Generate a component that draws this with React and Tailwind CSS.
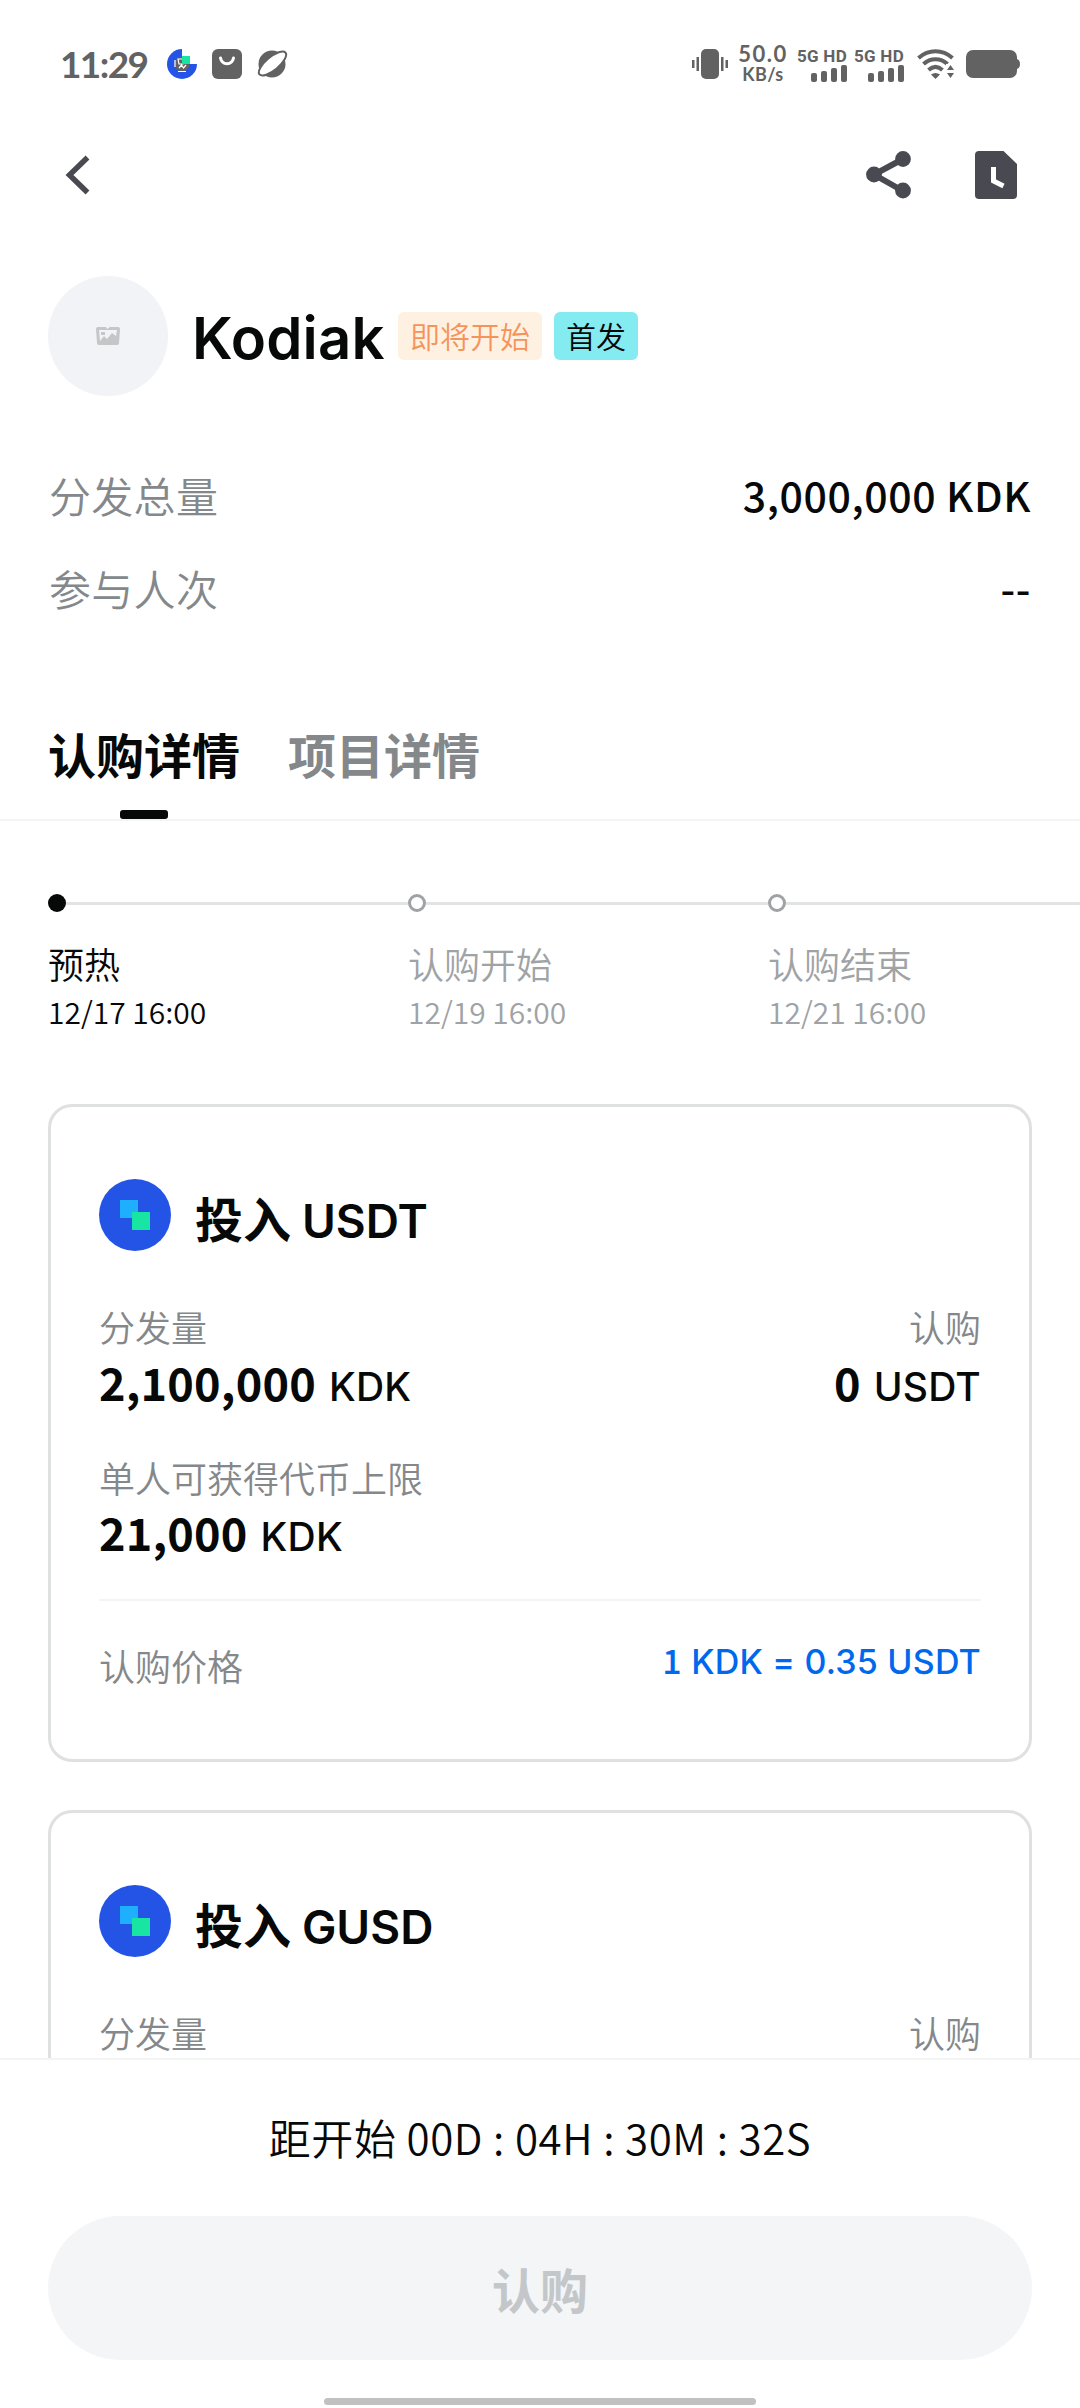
import React from 'react';

const steps = [
  { title: '预热', time: '12/17 16:00', active: true },
  { title: '认购开始', time: '12/19 16:00', active: false },
  { title: '认购结束', time: '12/21 16:00', active: false },
];

const pools = [
  { coin: 'USDT', details: { total: '2,100,000', subscribed: '0', limit: '21,000', price: '0.35' } },
  { coin: 'GUSD', details: null },
];

const SignalBars = () => (
  <div className="flex w-12 flex-col items-end">
    <span className="font-['Roboto',sans-serif] text-[17px] font-bold leading-[18px] tracking-[0.3px] whitespace-nowrap">5G HD</span>
    <svg width="36" height="17" viewBox="0 0 36 17" fill="currentColor">
      <rect x="0" y="8" width="6" height="9" rx="2" />
      <rect x="10" y="6" width="6" height="11" rx="2" />
      <rect x="20" y="3" width="6" height="14" rx="2" />
      <rect x="30" y="0" width="6" height="17" rx="2" />
    </svg>
  </div>
);

const StatusBar = () => (
  <div className="flex h-[128px] items-start justify-between pr-[60px] pl-[60px] pt-[44px] text-[#626262]">
    <div className="flex h-10 items-center">
      <span className="w-[105px] font-['Lato',sans-serif] text-[37px] font-bold leading-10 tracking-[-1.6px] whitespace-nowrap">11:29</span>
      {/* wallet app notification */}
      <svg className="ml-[2px]" width="30" height="30" viewBox="0 0 30 30">
        <circle cx="15" cy="15" r="15" fill="#2354e6" />
        <rect x="15" y="0" width="15" height="15" fill="#fff" />
        <circle cx="15" cy="15" r="7.500" fill="#626262" />
        <path d="M8 11v7M11 10h5v5h-4zM12 19l2.500-3 2 3 2.500-3M11 22.500h8" stroke="#fff" strokeWidth="1.2" fill="none" />
        <rect x="15" y="7" width="8" height="8" fill="#17e5a1" />
      </svg>
      <svg className="ml-[15px]" width="30" height="30" viewBox="0 0 30 30">
        <rect width="30" height="30" rx="6" fill="#626262" />
        <path d="M8.500 9c1.500 7.500 11.500 7.500 13 0" stroke="#fff" strokeWidth="3" strokeLinecap="round" fill="none" />
      </svg>
      <svg className="ml-[15px]" width="31" height="30" viewBox="0 0 31 30">
        <circle cx="15" cy="15" r="13.500" fill="currentColor" />
        <ellipse cx="15.500" cy="14.500" rx="17" ry="6.500" transform="rotate(-40 15.500 14.500)" fill="#fff" stroke="currentColor" strokeWidth="2" />
      </svg>
    </div>
    <div className="flex h-10 items-center">
      <svg width="36" height="32" viewBox="0 0 36 32" fill="currentColor">
        <rect x="9" y="1" width="18" height="30" rx="5" />
        <rect x="0" y="12" width="2.500" height="8" />
        <rect x="4.500" y="9" width="2.500" height="14" />
        <rect x="29" y="9" width="2.500" height="14" />
        <rect x="33.500" y="12" width="2.500" height="8" />
      </svg>
      <div className="ml-[10px] flex w-[50px] flex-col items-center font-['Lato',sans-serif] font-bold whitespace-nowrap">
        <span className="text-[22px] leading-[20px] tracking-[1.5px]">50.0</span>
        <span className="text-[18px] leading-[20px] tracking-[0.4px]">KB/s</span>
      </div>
      <div className="ml-[11px] flex gap-[9px]">
        <SignalBars />
        <SignalBars />
      </div>
      <svg className="ml-[13px]" width="38" height="30" viewBox="0 0 38 30">
        <g stroke="currentColor" strokeWidth="4" fill="none">
          <path d="M1.500 9c10-9 24-9 34 0" />
          <path d="M6.500 15c7-6.500 17-6.500 24 0" />
          <path d="M11.500 21c4.500-4 9.500-4 14 0" />
        </g>
        <path d="M14 25.500q4.500-3 9 0l-4.500 4.500z" fill="currentColor" />
        <rect x="29" y="15" width="9" height="15" fill="#fff" />
        <path d="M33.500 16l3.500 5h-7zM33.500 29l3.500-5h-7z" fill="currentColor" />
      </svg>
      <svg className="ml-[11px]" width="54" height="28" viewBox="0 0 54 28" fill="currentColor">
        <rect width="51" height="28" rx="7" />
        <path d="M51 9q3 1 3 5t-3 5z" />
      </svg>
    </div>
  </div>
);

const NavBar = () => (
  <div className="flex h-[94px] items-center justify-between pr-[63px] pl-[65px] text-[#494a51]">
    <svg width="26" height="40" viewBox="0 0 26 40" fill="none" stroke="currentColor" strokeWidth="5.500">
      <path d="M22.500 2.500L4.500 20l18 17.500" />
    </svg>
    <div className="flex items-center gap-[64px]">
      <svg width="45" height="48" viewBox="0 0 45 48" fill="currentColor">
        <path d="M37 8L8 23.500 37 40" fill="none" stroke="currentColor" strokeWidth="6" />
        <circle cx="8" cy="23.500" r="7.900" />
        <circle cx="37" cy="8" r="7.900" />
        <circle cx="37" cy="39.500" r="7.900" />
      </svg>
      <svg width="42" height="48" viewBox="0 0 42 48">
        <path d="M4 0h24.500L42 13v31q0 4-4 4H4q-4 0-4-4V4q0-4 4-4z" fill="currentColor" />
        <path d="M18.500 16v14l10 5" fill="none" stroke="#fff" strokeWidth="5" />
      </svg>
    </div>
  </div>
);

const ProjectHeader = () => (
  <div className="mt-[54px] flex h-[120px] items-center px-12">
    <div className="flex h-[120px] w-[120px] items-center justify-center rounded-full bg-[#f1f3f6]">
      <svg width="24" height="20" viewBox="0 0 24 20">
        <path d="M2 1h8l1 2 3-2h8q2 0 2 2l-1 14q0 2-2 2H3q-2 0-2-2L0 3q0-2 2-2z" fill="#c4c6c8" />
        <path d="M3 4h18l-1 6-4-3-5 6-3-3-4 5z" fill="#f1f3f6" />
        <rect x="5" y="6" width="4" height="3" fill="#c4c6c8" />
      </svg>
    </div>
    <h1 className="ml-6 w-[194px] pt-[3px] font-['Inter',sans-serif] text-[58px] font-semibold leading-[60px] tracking-[0.2px] whitespace-nowrap">Kodiak</h1>
    <span className="ml-[12px] h-12 rounded-md bg-[#fff1e2] px-3 text-[30px] font-[350] leading-[46px] text-[#f5945a]">即将开始</span>
    <span className="ml-3 h-12 rounded-md bg-[#84ebf1] px-3 text-[30px] font-[350] leading-[46px]">首发</span>
  </div>
);

const InfoRow = ({ label, value }) => (
  <div className="flex h-[93px] items-center justify-between">
    <span className="pl-px text-[42px] font-[350] tracking-[0.3px] text-[#84888b]">{label}</span>
    <span className="pr-px text-[41px] font-medium tracking-[0.6px]">{value}</span>
  </div>
);

const Tabs = () => (
  <div className="mt-[59px] flex h-[128px] gap-12 border-b-2 border-[#f3f4f4] px-12 text-[48px] font-bold">
    <div className="flex flex-col items-center justify-between">
      <span className="h-[116px] leading-[121px]">认购详情</span>
      <span className="h-[9px] w-12 rounded-[3px] bg-[#070808]" />
    </div>
    <span className="leading-[121px] text-[#84888b]">项目详情</span>
  </div>
);

const Timeline = () => (
  <div className="mt-[73px] flex overflow-hidden pl-12">
    {steps.map((step) => (
      <div key={step.title} className="w-[360px] flex-shrink-0">
        <div className="flex items-center">
          <span
            className={
              step.active
                ? 'h-[18px] w-[18px] rounded-full bg-[#070808]'
                : 'h-[18px] w-[18px] rounded-full border-[3px] border-[#a0a3a5]'
            }
          />
          <span className="h-[3px] flex-1 bg-[#e2e3e3]" />
        </div>
        <div className={step.active ? 'font-[350] text-[#070808]' : 'font-[350] text-[#a0a3a5]'}>
          <p className="mt-[25px] text-[36px] leading-[52px]">{step.title}</p>
          <p className="text-[30px] leading-[44px]">{step.time}</p>
        </div>
      </div>
    ))}
  </div>
);

const Label = ({ children }) => (
  <p className="text-[36px] font-[350] leading-[54px] text-[#84888b]">{children}</p>
);

const Amount = ({ value, unit }) => (
  <p className="h-14 text-[45px] font-bold leading-[56px] tracking-[0.2px] whitespace-nowrap">
    {value}
    <span className="ml-[13px] font-['Inter',sans-serif] text-[39px] font-medium leading-none">{unit}</span>
  </p>
);

const PoolDetails = ({ coin, details }) => (
  <>
    <div className="flex justify-between">
      <Amount value={details.total} unit="KDK" />
      <Amount value={details.subscribed} unit={coin} />
    </div>
    <div className="mt-10">
      <Label>单人可获得代币上限</Label>
      <Amount value={details.limit} unit="KDK" />
    </div>
    <div className="mt-[39px] flex items-start justify-between border-t-2 border-[#f3f4f4] pt-[37px]">
      <Label>认购价格</Label>
      <p className="font-['Inter',sans-serif] text-[34px] font-medium leading-[48px] tracking-[0.2px] text-[#0068ed]">
        <span className="font-['Noto_Sans_CJK_SC',sans-serif] leading-none">1</span> KDK = {details.price} {coin}
      </p>
    </div>
  </>
);

const PoolCard = ({ pool }) => (
  <div className="h-[658px] flex-shrink-0 rounded-3xl border-[3px] border-[#dfe0e0] px-12 pt-[72px]">
    <div className="flex h-[72px] items-center">
      <svg width="72" height="72" viewBox="0 0 72 72">
        <circle cx="36" cy="36" r="36" fill="#2354e6" />
        <rect x="21" y="21" width="18" height="18" fill="#1eb0ff" />
        <rect x="33" y="33" width="18" height="18" fill="#17e5a1" />
      </svg>
      <h2 className="ml-6 pt-[3px] text-[48px] font-bold leading-[72px]">
        投入 <span className="font-['Inter',sans-serif] text-[46px] font-semibold leading-none">{pool.coin}</span>
      </h2>
    </div>
    <div className="mt-[48px] mb-px flex justify-between">
      <Label>分发量</Label>
      <Label>认购</Label>
    </div>
    {pool.details && <PoolDetails coin={pool.coin} details={pool.details} />}
  </div>
);

const Footer = () => (
  <div className="flex h-[350px] flex-col items-center border-t-2 border-[#f3f4f4] bg-white">
    <p className="mt-[47px] text-[42px] font-[350] leading-[60px] tracking-[0.6px] whitespace-nowrap">
      距开始 00D : 04H : 30M : 32S
    </p>
    <button className="mt-[49px] h-[144px] w-[984px] rounded-full bg-[#f3f5f7] text-[48px] font-bold text-[#c4c7c9]">
      认购
    </button>
    <div className="mt-[38px] h-[7px] w-[432px] rounded-full bg-[#c1c1c1]" />
  </div>
);

const App = () => (
  <div className="flex h-[2408px] w-[1080px] flex-col overflow-hidden bg-white font-['Noto_Sans_CJK_SC',sans-serif] text-[#070808]">
    <StatusBar />
    <NavBar />
    <ProjectHeader />
    <div className="mt-[52px] px-12">
      <InfoRow label="分发总量" value="3,000,000 KDK" />
      <InfoRow label="参与人次" value="--" />
    </div>
    <Tabs />
    <Timeline />
    <div className="mt-[71px] flex min-h-0 flex-1 flex-col gap-12 overflow-hidden px-12">
      {pools.map((pool) => (
        <PoolCard key={pool.coin} pool={pool} />
      ))}
    </div>
    <Footer />
  </div>
);

export default App;
